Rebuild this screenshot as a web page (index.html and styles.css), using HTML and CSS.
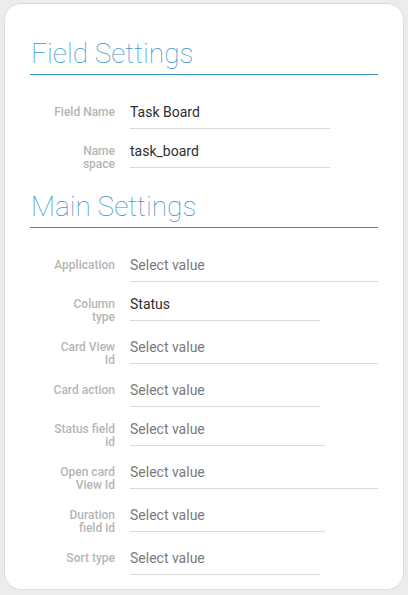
FILE: index.html
```html
<!DOCTYPE html>
<html lang="en">
<head>
<meta charset="utf-8">
<title>Field Settings</title>
<link rel="stylesheet" href="styles.css">
</head>
<body>
<div class="card">
  <h2 class="section-title">Field Settings</h2>
  <div class="row">
    <div class="label">Field Name</div>
    <div class="input w200 filled">Task Board</div>
  </div>
  <div class="row">
    <div class="label">Name<br>space</div>
    <div class="input w200 filled">task_board</div>
  </div>

  <h2 class="section-title second">Main Settings</h2>
  <div class="row">
    <div class="label">Application</div>
    <div class="input wfull">Select value</div>
  </div>
  <div class="row">
    <div class="label">Column<br>type</div>
    <div class="input w190 filled">Status</div>
  </div>
  <div class="row">
    <div class="label">Card View<br>Id</div>
    <div class="input wfull">Select value</div>
  </div>
  <div class="row">
    <div class="label">Card action</div>
    <div class="input w190">Select value</div>
  </div>
  <div class="row">
    <div class="label">Status field<br>id</div>
    <div class="input w195">Select value</div>
  </div>
  <div class="row">
    <div class="label">Open card<br>View Id</div>
    <div class="input wfull">Select value</div>
  </div>
  <div class="row">
    <div class="label">Duration<br>field id</div>
    <div class="input w195">Select value</div>
  </div>
  <div class="row">
    <div class="label">Sort type</div>
    <div class="input w190">Select value</div>
  </div>
</div>
</body>
</html>
```

FILE: styles.css
```css
html, body {
  margin: 0;
  padding: 0;
}
body {
  background: #ececec;
  font-family: Roboto, "Liberation Sans", Arial, sans-serif;
  width: 408px;
  height: 595px;
  padding: 3px 4px 0 4px;
  box-sizing: border-box;
}
.card {
  background: #ffffff;
  border: 1px solid #dcdcdc;
  border-radius: 17px;
  height: 587px;
  box-sizing: border-box;
  padding: 34px 25px 0 25px;
}
.section-title {
  margin: 0 0 27px 0;
  font-family: Roboto, "Liberation Sans", sans-serif;
  font-size: 28px;
  line-height: 32px;
  font-weight: 100;
  color: #3f95cd;
  padding: 0 0 4px 1px;
  border-bottom: 1px solid #3a95be;
}
.section-title.second {
  margin-top: 19px;
}
.row {
  display: flex;
  align-items: flex-start;
  margin-bottom: 12px;
}
.label {
  width: 85px;
  flex: none;
  text-align: right;
  font-size: 12px;
  line-height: 13px;
  font-weight: 500;
  color: #b6b6b6;
  padding: 4px 0 1px 0;
  margin-right: 15px;
}
.input {
  font-size: 14px;
  line-height: 20px;
  color: #7a7a7a;
  padding: 0 0 6px 0;
  border-bottom: 1px solid #dadada;
}
.input.filled {
  color: #2e2e2e;
}
.w200 { width: 200px; }
.w190 { width: 190px; }
.w195 { width: 195px; }
.wfull { width: 248px; }
```
